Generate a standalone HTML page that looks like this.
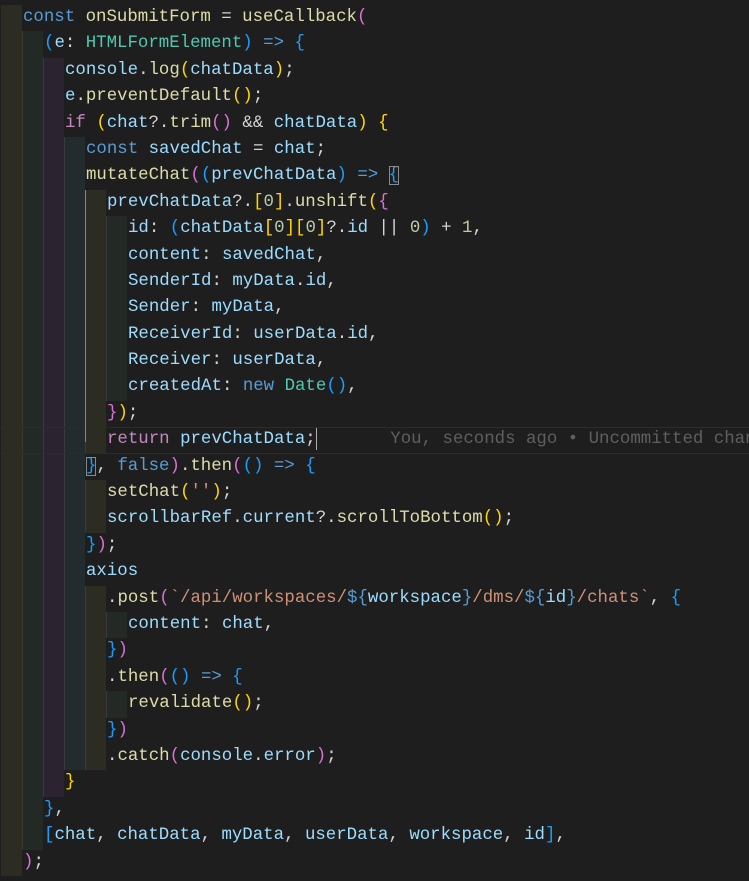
<!DOCTYPE html>
<html><head><meta charset="utf-8"><style>
html,body{margin:0;padding:0;background:#1e1e1e;width:749px;height:881px;overflow:hidden}
#c{position:relative;padding-top:5px;font-family:"Liberation Mono",monospace;font-size:17.4px;color:#d4d4d4;overflow:hidden;width:749px}
.l{white-space:pre;overflow:hidden;height:26.4px;line-height:26.4px;background-repeat:no-repeat;background-size:var(--w) 100%;
background-image:linear-gradient(to right,#1e1e1e 0 1px,#2d2c22 1px 22px,#3a3a33 22px 23px,#232a25 23px 43px,#3a3a3a 43px 44px,#2b2430 44px 64px,#3a3a3a 64px 65px,#222b2d 65px 85px,#3a3a3a 85px 86px,#2d2c22 86px 106px,#3a3a3a 106px 107px,#232a25 107px 127px)}
.L0{--w:22px;padding-left:23px}.L1{--w:43px;padding-left:44px}.L2{--w:64px;padding-left:65px}
.L3{--w:85px;padding-left:86px}.L4{--w:106px;padding-left:107px}.L5{--w:127px;padding-left:128px}
.k{color:#569cd6}.v{color:#9cdcfe}.f{color:#dcdcaa}.t{color:#4ec9b0}.c{color:#c586c0}.s{color:#ce9178}.n{color:#b5cea8}
.o{color:#da70d6}.b{color:#179fff}.g{color:#ffd700}
.box{outline:1px solid #8a8a8a;outline-offset:-1px}
.cur{box-shadow:inset 0 1px 0 #2c2c2c,inset 0 -1px 0 #2c2c2c}
.gh{color:#5f5f5f}
#ag{position:absolute;left:85px;top:190px;width:1px;height:252px;background:#7d8a90}
#cr{display:inline-block;width:1.5px;height:22px;background:#aeafad;vertical-align:middle}
</style></head><body><div id="c">
<div class="l L0"><span class="k">const</span> <span class="f">onSubmitForm</span> = <span class="f">useCallback</span><span class="o">(</span></div>
<div class="l L1"><span class="b">(</span><span class="v">e</span>: <span class="t">HTMLFormElement</span><span class="b">)</span> <span class="k">=&gt;</span> <span class="b">{</span></div>
<div class="l L2"><span class="v">console</span>.<span class="f">log</span><span class="g">(</span><span class="v">chatData</span><span class="g">)</span>;</div>
<div class="l L2"><span class="v">e</span>.<span class="f">preventDefault</span><span class="g">()</span>;</div>
<div class="l L2"><span class="c">if</span> <span class="g">(</span><span class="v">chat</span>?.<span class="f">trim</span><span class="o">()</span> &amp;&amp; <span class="v">chatData</span><span class="g">)</span> <span class="g">{</span></div>
<div class="l L3"><span class="k">const</span> <span class="v">savedChat</span> = <span class="v">chat</span>;</div>
<div class="l L3"><span class="f">mutateChat</span><span class="o">(</span><span class="b">(</span><span class="v">prevChatData</span><span class="b">)</span> <span class="k">=&gt;</span> <span class="b box">{</span></div>
<div class="l L4"><span class="v">prevChatData</span>?.<span class="g">[</span><span class="n">0</span><span class="g">]</span>.<span class="f">unshift</span><span class="g">(</span><span class="o">{</span></div>
<div class="l L5"><span class="v">id</span>: <span class="b">(</span><span class="v">chatData</span><span class="g">[</span><span class="n">0</span><span class="g">][</span><span class="n">0</span><span class="g">]</span>?.<span class="v">id</span> || <span class="n">0</span><span class="b">)</span> + <span class="n">1</span>,</div>
<div class="l L5"><span class="v">content</span>: <span class="v">savedChat</span>,</div>
<div class="l L5"><span class="v">SenderId</span>: <span class="v">myData</span>.<span class="v">id</span>,</div>
<div class="l L5"><span class="v">Sender</span>: <span class="v">myData</span>,</div>
<div class="l L5"><span class="v">ReceiverId</span>: <span class="v">userData</span>.<span class="v">id</span>,</div>
<div class="l L5"><span class="v">Receiver</span>: <span class="v">userData</span>,</div>
<div class="l L5"><span class="v">createdAt</span>: <span class="k">new</span> <span class="t">Date</span><span class="b">()</span>,</div>
<div class="l L4"><span class="o">}</span><span class="g">)</span>;</div>
<div class="l L4 cur"><span class="c">return</span> <span class="v">prevChatData</span>;<span id="cr"></span><span class="gh">       You, seconds ago • Uncommitted changes</span></div>
<div class="l L3"><span class="b box">}</span>, <span class="k">false</span><span class="o">)</span>.<span class="f">then</span><span class="o">(</span><span class="b">()</span> <span class="k">=&gt;</span> <span class="b">{</span></div>
<div class="l L4"><span class="f">setChat</span><span class="g">(</span><span class="s">''</span><span class="g">)</span>;</div>
<div class="l L4"><span class="v">scrollbarRef</span>.<span class="v">current</span>?.<span class="f">scrollToBottom</span><span class="g">()</span>;</div>
<div class="l L3"><span class="b">}</span><span class="o">)</span>;</div>
<div class="l L3"><span class="v">axios</span></div>
<div class="l L4">.<span class="f">post</span><span class="o">(</span><span class="s">`/api/workspaces/</span><span class="k">${</span><span class="v">workspace</span><span class="k">}</span><span class="s">/dms/</span><span class="k">${</span><span class="v">id</span><span class="k">}</span><span class="s">/chats`</span>, <span class="b">{</span></div>
<div class="l L5"><span class="v">content</span>: <span class="v">chat</span>,</div>
<div class="l L4"><span class="b">}</span><span class="o">)</span></div>
<div class="l L4">.<span class="f">then</span><span class="o">(</span><span class="b">()</span> <span class="k">=&gt;</span> <span class="b">{</span></div>
<div class="l L5"><span class="f">revalidate</span><span class="g">()</span>;</div>
<div class="l L4"><span class="b">}</span><span class="o">)</span></div>
<div class="l L4">.<span class="f">catch</span><span class="o">(</span><span class="v">console</span>.<span class="v">error</span><span class="o">)</span>;</div>
<div class="l L2"><span class="g">}</span></div>
<div class="l L1"><span class="b">}</span>,</div>
<div class="l L1"><span class="b">[</span><span class="v">chat</span>, <span class="v">chatData</span>, <span class="v">myData</span>, <span class="v">userData</span>, <span class="v">workspace</span>, <span class="v">id</span><span class="b">]</span>,</div>
<div class="l L0"><span class="o">)</span>;</div>
<div id="ag"></div>
</div></body></html>
